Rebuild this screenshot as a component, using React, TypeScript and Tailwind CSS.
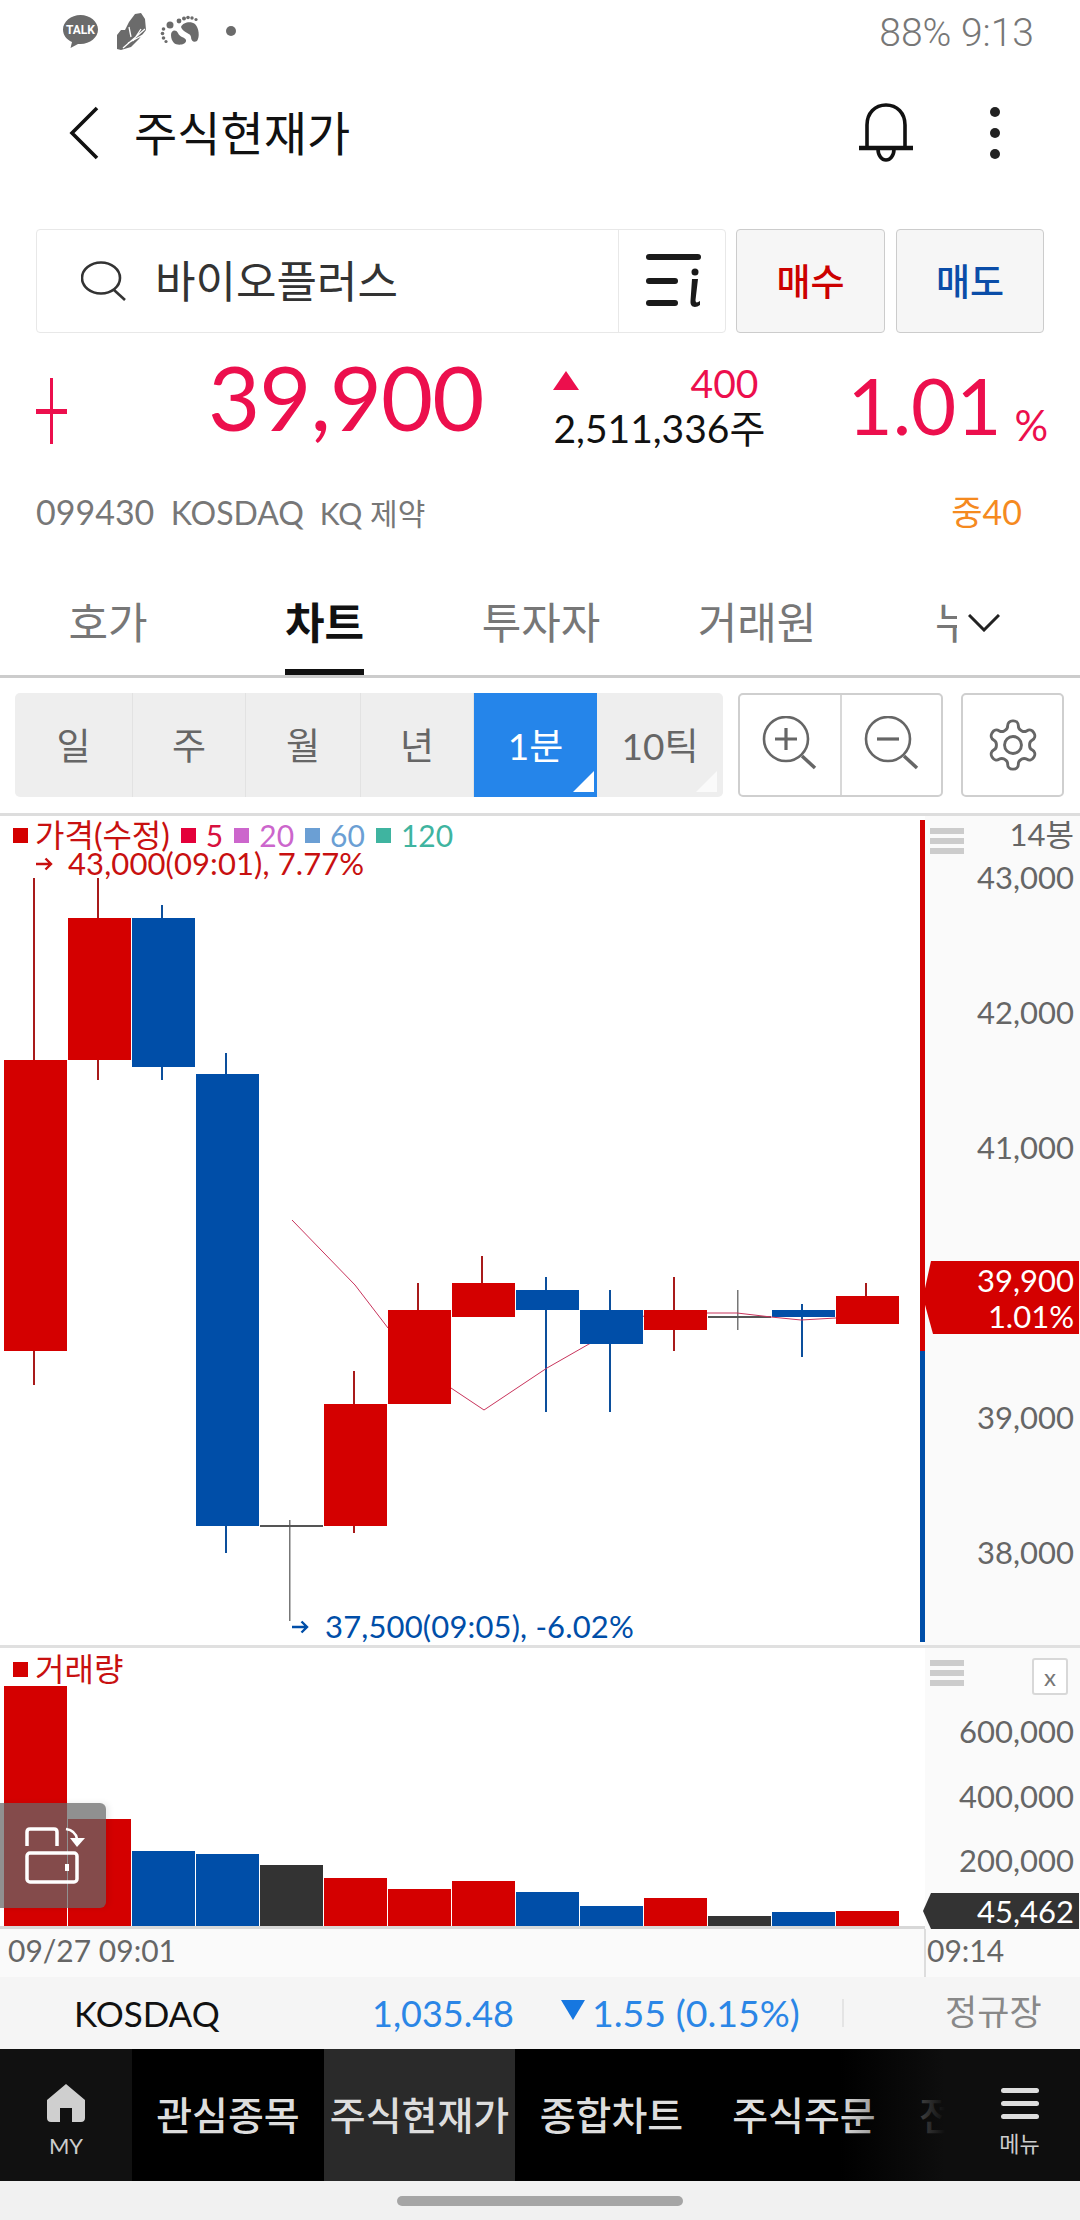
import React from "react";

type C = { x: number; c: "r" | "b" | "k"; t: number; b: number; wt: number; wb: number };
const candles: C[] = [
  { x: 4, c: "r", t: 1060, b: 1351, wt: 878, wb: 1385 },
  { x: 68, c: "r", t: 918, b: 1060, wt: 878, wb: 1080 },
  { x: 132, c: "b", t: 918, b: 1067, wt: 905, wb: 1080 },
  { x: 196, c: "b", t: 1074, b: 1526, wt: 1053, wb: 1553 },
  { x: 260, c: "k", t: 1525, b: 1527, wt: 1520, wb: 1621 },
  { x: 324, c: "r", t: 1404, b: 1526, wt: 1371, wb: 1533 },
  { x: 388, c: "r", t: 1310, b: 1404, wt: 1283, wb: 1404 },
  { x: 452, c: "r", t: 1283, b: 1317, wt: 1256, wb: 1317 },
  { x: 516, c: "b", t: 1290, b: 1310, wt: 1277, wb: 1412 },
  { x: 580, c: "b", t: 1310, b: 1344, wt: 1290, wb: 1412 },
  { x: 644, c: "r", t: 1310, b: 1330, wt: 1277, wb: 1351 },
  { x: 708, c: "k", t: 1316, b: 1318, wt: 1290, wb: 1330 },
  { x: 772, c: "b", t: 1310, b: 1317, wt: 1304, wb: 1357 },
  { x: 836, c: "r", t: 1296, b: 1324, wt: 1283, wb: 1296 },
];
const volumes: [number, "r" | "b" | "k"][] = [
  [1686, "r"], [1819, "r"], [1851, "b"], [1854, "b"], [1865, "k"], [1878, "r"], [1889, "r"],
  [1881, "r"], [1892, "b"], [1906, "b"], [1898, "r"], [1916, "k"], [1912, "b"], [1911, "r"],
];
const body = { r: "#d40000", b: "#004ea8", k: "#333333" };
const wick = { r: "#a81a1a", b: "#0c4f9c", k: "#777777" };

function PriceSvg() {
  return (
    <svg className="absolute inset-0 w-full h-full" viewBox="0 816 925 829">
      {candles.map((k) => (
        <g key={k.x}>
          <rect x={k.x + 29} y={k.wt} width={k.c === "k" ? 1.5 : 2} height={k.wb - k.wt} fill={wick[k.c]} />
          <rect x={k.x} y={k.t} width={63} height={k.b - k.t} fill={k.c === "k" ? "#555555" : body[k.c]} />
        </g>
      ))}
      <polyline
        points="292,1220 355,1285 388,1328 451,1388 484,1410 547,1368 589,1344 644,1316 708,1313 737,1313 771,1317 801,1320 836,1318"
        fill="none"
        stroke="#c8345c"
        strokeWidth="1"
      />
      {candles.slice(6, 8).map((k) => (
        <rect key={k.x} x={k.x} y={k.t} width={63} height={k.b - k.t} fill={body[k.c]} />
      ))}
      <rect x={580} y={1310} width={63} height={34} fill={body.b} />
      <rect x={644} y={1310} width={63} height={20} fill={body.r} />
      <rect x={920} y={820} width={5} height={531} fill="#d40000" />
      <rect x={920} y={1351} width={5} height={291} fill="#004ea8" />
    </svg>
  );
}

function Arrow({ color }: { color: string }) {
  return (
    <svg width="17" height="14" viewBox="0 0 17 14" fill="none" stroke={color} strokeWidth="2.4">
      <path d="M0 7H15M9.5 1.5L15 7L9.5 12.5" />
    </svg>
  );
}

function Sq({ c }: { c: string }) {
  return <span className={`inline-block w-[15px] h-[15px] ${c}`} />;
}

function Bars() {
  return (
    <div className="flex flex-col gap-[4px] w-[34px] absolute left-[5px] top-[12px]">
      <div className="h-[6px] bg-[#cccccc]" />
      <div className="h-[6px] bg-[#cccccc]" />
      <div className="h-[6px] bg-[#cccccc]" />
    </div>
  );
}

function AxisLabel({ cls, text }: { cls: string; text: string }) {
  return <span className={`absolute right-[6px] -translate-y-1/2 text-[31px] leading-none text-[#666666] ${cls}`}>{text}</span>;
}

function StatusBar() {
  return (
    <div className="h-[62px] flex items-start pt-[13px] pl-[63px] pr-[46px] justify-between text-[#777777] shrink-0">
      <svg width="176" height="40" viewBox="0 0 176 40">
        <path d="M17.500 2C8 2 0 8.600 0 16.500C0 22 3.500 26.500 9 29L7.500 35L15 31C16 31 17 31 17.500 31C27 31 35 24.500 35 16.500C35 8.600 27 2 17.500 2Z" fill="#6b6b6b" />
        <text x="17.500" y="21" fontSize="12" fontWeight="700" fill="#ffffff" textAnchor="middle" fontFamily="Roboto">TALK</text>
        <path d="M72 1L78 0L82 6L83 17L76 26L68 34L58 37L54 36L54 22L58 17L62 17L66 9Z" fill="#6b6b6b" />
        <path d="M60 35L82 16M65 30L80 22M70 28L78 16M66 14L68 24" stroke="#ffffff" strokeWidth="1.300" fill="none" />
        <g fill="#6b6b6b">
          <circle cx="107" cy="12" r="3.500" />
          <path d="M108 22C108 17 113 16 115 20C116 24 122 24 123 27C124 32 114 33 111 30C109 28 108 25 108 22Z" />
          <path d="M118 14C120 9 128 8 132 11C136 15 137 24 134 28C131 30 128 28 128 24C128 20 120 20 118 14Z" />
          <circle cx="100.500" cy="16" r="1.800" />
          <circle cx="99.500" cy="20.500" r="1.800" />
          <circle cx="100.500" cy="25" r="1.800" />
          <circle cx="103" cy="28.500" r="1.600" />
          <circle cx="116" cy="8" r="2.400" />
          <circle cx="121" cy="5.500" r="2" />
          <circle cx="125" cy="4.500" r="1.800" />
          <circle cx="129" cy="5" r="1.700" />
          <circle cx="133" cy="6.500" r="1.600" />
          <circle cx="168" cy="18" r="5" />
        </g>
      </svg>
      <span className="font-['Roboto',sans-serif] font-light text-[39px] leading-none mt-[1px]">88% 9:13</span>
    </div>
  );
}

function Header() {
  return (
    <div className="h-[142px] flex items-center pl-[69px] pr-[80px] shrink-0">
      <svg width="30" height="54" viewBox="0 0 30 54" fill="none" stroke="#111111" strokeWidth="3.600">
        <path d="M28 2L3 27L28 52" />
      </svg>
      <span className="ml-[35px] text-[47px] leading-none text-[#111111]">주식현재가</span>
      <svg className="ml-auto" width="56" height="60" viewBox="0 0 56 60" fill="none" stroke="#111111" strokeWidth="3.600">
        <path d="M9 43V22C9 10 17 2 28 2C39 2 47 10 47 22V43" />
        <path d="M1 45H55" strokeWidth="4.500" />
        <path d="M20 46C20 53 24 57 28 57C32 57 36 53 36 46" />
      </svg>
      <div className="ml-[76px] flex flex-col gap-[11px]">
        <span className="w-[10px] h-[10px] rounded-full bg-[#222222]" />
        <span className="w-[10px] h-[10px] rounded-full bg-[#222222]" />
        <span className="w-[10px] h-[10px] rounded-full bg-[#222222]" />
      </div>
    </div>
  );
}

function SearchRow() {
  return (
    <div className="mt-[25px] h-[104px] pl-[36px] flex shrink-0">
      <div className="w-[690px] flex border border-[#e8e8e8] rounded-[4px]">
        <div className="w-[582px] flex items-center pl-[44px] border-r border-[#e8e8e8]">
          <svg width="47" height="40" viewBox="0 0 47 40" fill="none" stroke="#333333" strokeWidth="2.600">
            <ellipse cx="20" cy="17" rx="19" ry="15.500" />
            <path d="M33 29L44 39" />
          </svg>
          <span className="ml-[27px] text-[44px] leading-none text-[#333333]">바이오플러스</span>
        </div>
        <div className="flex-1 flex items-center justify-center pl-[3px]">
          <svg width="56" height="54" viewBox="0 0 56 54" fill="#1a1a1a">
            <rect x="0" y="0" width="55" height="6" rx="3" />
            <rect x="0" y="24" width="32" height="6" rx="3" />
            <rect x="0" y="46" width="32" height="6" rx="3" />
            <circle cx="49" cy="18" r="3.500" />
            <path d="M46 25H52L49.500 46C49.500 49 51 49 54 47L54 51C50 54 44 54 44.500 47Z" />
          </svg>
        </div>
      </div>
      <button className="ml-[10px] w-[149px] bg-[#f6f6f6] border border-[#cccccc] rounded-[4px] text-[#cc0000] text-[37px] font-medium leading-none">매수</button>
      <button className="ml-[11px] w-[148px] bg-[#f6f6f6] border border-[#cccccc] rounded-[4px] text-[#0a4da8] text-[37px] font-medium leading-none">매도</button>
    </div>
  );
}

function Quote() {
  return (
    <div className="h-[127px] flex items-start relative shrink-0 text-[#ec0f4d]">
      <div className="absolute left-[36px] top-[45px] w-[31px] h-[66px] flex items-center justify-center">
        <span className="absolute w-[3px] h-[66px] bg-[#ec0f4d]" />
        <span className="absolute w-[31px] h-[5px] bg-[#ec0f4d]" />
      </div>
      <span className="ml-[208px] mt-[18px] text-[90px] leading-none tracking-[-1px]">39,900</span>
      <div className="ml-[70px] w-[210px] mt-[30px] flex flex-col">
        <div className="flex justify-between items-center h-[40px]">
          <span className="w-0 h-0 border-l-[13px] border-r-[13px] border-b-[19px] border-l-transparent border-r-transparent border-b-[#ec0f4d] -mt-[6px]" />
          <span className="text-[39px] leading-none mr-[5px]">400</span>
        </div>
        <span className="text-[39px] leading-none text-[#111111] mt-[6px] whitespace-nowrap">2,511,336주</span>
      </div>
      <span className="ml-[84px] mt-[33px] text-[78px] leading-none">1.01</span>
      <span className="ml-[13px] mt-[71px] text-[42px] leading-none">%</span>
    </div>
  );
}

function Info() {
  return (
    <div className="mt-[32px] h-[40px] flex items-center pl-[36px] pr-[58px] justify-between text-[32px] leading-none text-[#777777] shrink-0">
      <span className="whitespace-pre">
        <span className="text-[34px]">099430</span>  KOSDAQ <span className="text-[30px]"> KQ 제약</span>
      </span>
      <span className="text-[#f58a1f] text-[34px]">중40</span>
    </div>
  );
}

function Tabs() {
  const cls = "w-[216px] text-center text-[43px] leading-none text-[#777777] whitespace-nowrap mt-[9px]";
  return (
    <div className="mt-[60px] h-[86px] relative flex items-start border-b-[3px] border-[#cccccc] overflow-hidden shrink-0">
      <span className={cls}>호가</span>
      <div className="w-[217px] h-[83px] flex flex-col items-center relative">
        <span className="text-[43px] leading-none text-[#111111] font-bold mt-[9px]">차트</span>
        <span className="absolute bottom-0 w-[79px] h-[6px] bg-[#111111]" />
      </div>
      <span className={cls}>투자자</span>
      <span className={cls}>거래원</span>
      <span className="ml-[70px] text-[43px] leading-none text-[#777777] whitespace-nowrap mt-[9px]">누적</span>
      <div className="absolute right-0 top-0 w-[123px] h-[83px] flex items-start pl-[11px] pt-[22px] bg-white">
        <svg width="32" height="18" viewBox="0 0 32 18" fill="none" stroke="#222222" strokeWidth="3">
          <path d="M1 1L16 16L31 1" />
        </svg>
      </div>
    </div>
  );
}

function Toolbar() {
  const seg = "h-full flex items-center justify-center text-[37px] leading-none text-[#666666] border-r border-[#e2e2e2]";
  return (
    <div className="h-[138px] flex pl-[15px] pt-[15px] shrink-0">
      <div className="w-[708px] h-[104px] flex bg-[#eeeeee] rounded-[5px] overflow-hidden">
        <span className={`${seg} w-[118px]`}>일</span>
        <span className={`${seg} w-[113px]`}>주</span>
        <span className={`${seg} w-[115px]`}>월</span>
        <span className={`${seg} w-[113px]`}>년</span>
        <span className="w-[123px] h-full flex items-center justify-center text-[37px] leading-none text-white bg-[#2585ea] relative">
          1분
          <span className="absolute right-[3px] bottom-[5px] w-0 h-0 [border-right:21px_solid_white] [border-top:21px_solid_transparent]" />
        </span>
        <span className="w-[126px] h-full flex items-center justify-center text-[37px] leading-none text-[#666666] relative">
          10틱
          <span className="absolute right-[6px] bottom-[5px] w-0 h-0 [border-right:21px_solid_#fafafa] [border-top:21px_solid_transparent]" />
        </span>
      </div>
      <div className="ml-[15px] w-[205px] h-[104px] flex border-2 border-[#cfcfcf] rounded-[5px] bg-white">
        <div className="w-[102px] flex items-center justify-center border-r-2 border-[#d8d8d8] pb-[5px]">
          <svg width="56" height="54" viewBox="0 0 56 54" fill="none" stroke="#666666" strokeWidth="2.600">
            <circle cx="24" cy="23" r="22" />
            <path d="M24 12V34M13 23H35" strokeWidth="3.200" />
            <path d="M40 40L53 52" strokeWidth="3.500" />
          </svg>
        </div>
        <div className="flex-1 flex items-center justify-center pb-[5px]">
          <svg width="56" height="54" viewBox="0 0 56 54" fill="none" stroke="#666666" strokeWidth="2.600">
            <circle cx="24" cy="23" r="22" />
            <path d="M13 23H35" strokeWidth="3.200" />
            <path d="M40 40L53 52" strokeWidth="3.500" />
          </svg>
        </div>
      </div>
      <div className="ml-[18px] w-[103px] h-[104px] flex items-center justify-center border-2 border-[#cfcfcf] rounded-[5px] bg-white">
        <svg width="58" height="58" viewBox="0 0 24 24" fill="none" stroke="#666666" strokeWidth="1.200" strokeLinejoin="round">
          <path d="M12.220 2h-.440a2 2 0 0 0-2 2v.180a2 2 0 0 1-1 1.730l-.430.250a2 2 0 0 1-2 0l-.150-.080a2 2 0 0 0-2.730.730l-.220.380a2 2 0 0 0 .730 2.730l.150.100a2 2 0 0 1 1 1.720v.510a2 2 0 0 1-1 1.740l-.150.090a2 2 0 0 0-.730 2.730l.220.380a2 2 0 0 0 2.730.730l.150-.080a2 2 0 0 1 2 0l.430.250a2 2 0 0 1 1 1.730V20a2 2 0 0 0 2 2h.440a2 2 0 0 0 2-2v-.180a2 2 0 0 1 1-1.730l.430-.250a2 2 0 0 1 2 0l.150.080a2 2 0 0 0 2.730-.730l.220-.390a2 2 0 0 0-.730-2.730l-.150-.080a2 2 0 0 1-1-1.740v-.500a2 2 0 0 1 1-1.740l.150-.090a2 2 0 0 0 .730-2.730l-.220-.380a2 2 0 0 0-2.730-.730l-.150.080a2 2 0 0 1-2 0l-.430-.250a2 2 0 0 1-1-1.730V4a2 2 0 0 0-2-2z" />
          <circle cx="12" cy="12" r="3.500" />
        </svg>
      </div>
    </div>
  );
}

function PricePanel() {
  return (
    <div className="h-[829px] flex border-t-[3px] border-[#dddddd] -mt-[3px] box-content shrink-0">
      <div className="w-[925px] relative">
        <PriceSvg />
        <div className="absolute left-[13px] top-[3px] flex items-center text-[30px] leading-none gap-[10px]">
          <Sq c="bg-[#d40000]" />
          <span className="text-[#c81010] text-[32px] -ml-[3px]">가격(수정)</span>
          <Sq c="bg-[#e4003a] ml-[1px]" />
          <span className="text-[#d8103f]">5</span>
          <Sq c="bg-[#cc66cc] ml-[1px]" />
          <span className="text-[#cc66cc]">20</span>
          <Sq c="bg-[#6b9fd4] ml-[1px]" />
          <span className="text-[#6b9fd4]">60</span>
          <Sq c="bg-[#3fb4a0] ml-[1px]" />
          <span className="text-[#3fb4a0]">120</span>
        </div>
        <div className="absolute left-[36px] top-[32px] flex items-center gap-[15px] text-[31px] leading-none text-[#c81010] tracking-[0.1px]">
          <Arrow color="#c81010" />
          <span>43,000(09:01), 7.77%</span>
        </div>
        <div className="absolute left-[292px] top-[795px] flex items-center gap-[16px] text-[31px] leading-none text-[#004ea8] tracking-[0.15px]">
          <Arrow color="#004ea8" />
          <span>37,500(09:05), -6.02%</span>
        </div>
      </div>
      <div className="flex-1 relative bg-[#fafafa]">
        <Bars />
        <span className="absolute right-[6px] top-[3px] text-[31px] leading-none text-[#666666]">14봉</span>
        <AxisLabel cls="top-[61px]" text="43,000" />
        <AxisLabel cls="top-[196px]" text="42,000" />
        <AxisLabel cls="top-[331px]" text="41,000" />
        <AxisLabel cls="top-[601px]" text="39,000" />
        <AxisLabel cls="top-[736px]" text="38,000" />
        <div className="absolute left-[-2px] top-[445px] w-[156px] h-[73px] bg-[#d40000] [clip-path:polygon(8px_0,100%_0,100%_100%,10px_100%,0_50%)] flex flex-col items-end justify-center pr-[5px] text-white text-[31px] leading-[36px]">
          <span>39,900</span>
          <span>1.01%</span>
        </div>
      </div>
    </div>
  );
}

function VolumePanel() {
  return (
    <div className="h-[284px] flex border-t-[3px] border-[#e0e0e0] shrink-0">
      <div className="w-[925px] relative border-b-[3px] border-[#d8d8d8]">
        <svg className="absolute inset-0 w-full h-full" viewBox="0 1648 925 278" preserveAspectRatio="none">
          {volumes.map(([top, c], i) => (
            <rect key={i} x={4 + i * 64} y={top} width={63} height={1926 - top} fill={body[c]} />
          ))}
        </svg>
        <div className="absolute left-[13px] top-[5px] flex items-center gap-[7px] text-[32px] leading-none text-[#c81010]">
          <Sq c="bg-[#d40000]" />
          <span>거래량</span>
        </div>
        <div className="absolute left-0 top-[155px] w-[106px] h-[105px] bg-[#676767ba] rounded-r-[6px] shadow-[3px_0_6px_rgba(0,0,0,0.08)] flex items-start pl-[25px] pt-[24px]">
          <svg width="62" height="58" viewBox="0 0 62 58" fill="none" stroke="#ffffff" strokeWidth="3.500" strokeLinejoin="round">
            <path d="M2 19V5C2 3 3 2 5 2H29C31 2 32 3 32 5V19" />
            <path d="M41 2C47 3 51 6 52 12" strokeWidth="2.500" />
            <path d="M45 11H60L52 20Z" fill="#ffffff" stroke="none" />
            <rect x="2" y="26" width="50" height="29" rx="3" />
            <rect x="40" y="37" width="4" height="7" fill="#ffffff" stroke="none" />
          </svg>
        </div>
      </div>
      <div className="flex-1 relative bg-[#fafafa] border-b-[3px] border-[#fafafa]">
        <Bars />
        <div className="absolute left-[107px] top-[10px] w-[36px] h-[37px] border-2 border-[#d8d8d8] rounded-[3px] bg-white flex items-center justify-center text-[24px] leading-none text-[#777777]">x</div>
        <AxisLabel cls="top-[83px]" text="600,000" />
        <AxisLabel cls="top-[148px]" text="400,000" />
        <AxisLabel cls="top-[212px]" text="200,000" />
        <div className="absolute left-[-2px] top-[245px] w-[156px] h-[36px] bg-[#333333] [clip-path:polygon(8px_0,100%_0,100%_100%,8px_100%,0_50%)] flex items-center justify-end pr-[5px] text-white text-[31px] leading-none">45,462</div>
      </div>
    </div>
  );
}

function DateRow() {
  return (
    <div className="h-[48px] flex bg-[#fafafa] text-[30px] leading-none text-[#666666] shrink-0">
      <span className="w-[924px] pl-[8px] pt-[6px]">09/27 09:01</span>
      <span className="pl-[1px] pt-[6px] h-full border-l-2 border-[#dddddd]">09:14</span>
    </div>
  );
}

function Ticker() {
  return (
    <div className="h-[72px] flex items-center bg-[#f5f5f5] leading-none shrink-0">
      <span className="ml-[74px] w-[298px] text-[35px] text-[#111111]">KOSDAQ</span>
      <span className="w-[189px] text-[36px] text-[#2b86e6]">1,035.48</span>
      <span className="w-0 h-0 border-l-[12px] border-r-[12px] border-t-[20px] border-l-transparent border-r-transparent border-t-[#1677e0] mr-[7px] -mt-[6px]" />
      <span className="w-[250px] text-[37.500px] text-[#2b86e6] whitespace-nowrap">1.55 (0.15%)</span>
      <span className="w-[2px] h-[28px] bg-[#e4e4e4]" />
      <span className="ml-[101px] text-[35px] text-[#888888] -mt-[4px]">정규장</span>
    </div>
  );
}

function Nav() {
  const item = "h-full flex items-center justify-center text-[39px] leading-none text-[#dddddd] font-medium whitespace-nowrap";
  return (
    <div className="h-[132px] flex relative bg-black overflow-hidden shrink-0">
      <div className="w-[132px] bg-[#111111] flex flex-col items-center pt-[34px]">
        <svg width="40" height="40" viewBox="0 0 40 40" fill="#cfcfcf">
          <path d="M20 1L39 17V35C39 37.500 37.500 39 35 39H26V25H14V39H5C2.500 39 1 37.500 1 35V17Z" />
        </svg>
        <span className="mt-[12px] text-[22px] leading-none text-[#cccccc]">MY</span>
      </div>
      <span className={`${item} w-[192px]`}>관심종목</span>
      <span className={`${item} w-[191px] bg-[#2a2a2a]`}>주식현재가</span>
      <span className={`${item} w-[193px]`}>종합차트</span>
      <span className={`${item} w-[192px]`}>주식주문</span>
      <span className="h-full flex items-center pl-[19px] text-[39px] leading-none text-[#dddddd] font-medium whitespace-nowrap">전체메뉴</span>
      <div className="absolute right-0 top-0 h-full w-[240px] flex">
        <div className="w-[105px] h-full bg-gradient-to-r from-transparent to-[#0e0e0e]" />
        <div className="flex-1 bg-[#0e0e0e] flex flex-col items-center pt-[39px] pl-[14px]">
          <div className="flex flex-col gap-[8px] w-[38px]">
            <span className="h-[5px] rounded-full bg-[#dddddd]" />
            <span className="h-[5px] rounded-full bg-[#dddddd]" />
            <span className="h-[5px] rounded-full bg-[#dddddd]" />
          </div>
          <span className="mt-[14px] text-[22px] leading-none text-[#cccccc]">메뉴</span>
        </div>
      </div>
    </div>
  );
}

export default function App() {
  return (
    <div className="w-[1080px] h-[2220px] overflow-hidden bg-white flex flex-col font-['Lato','Noto_Sans_CJK_KR',sans-serif]">
      <StatusBar />
      <Header />
      <SearchRow />
      <Quote />
      <Info />
      <Tabs />
      <Toolbar />
      <PricePanel />
      <VolumePanel />
      <DateRow />
      <Ticker />
      <Nav />
      <div className="flex-1 bg-[#f1f1f1] flex items-center justify-center">
        <span className="w-[286px] h-[10px] rounded-full bg-[#a5a5a5]" />
      </div>
    </div>
  );
}
